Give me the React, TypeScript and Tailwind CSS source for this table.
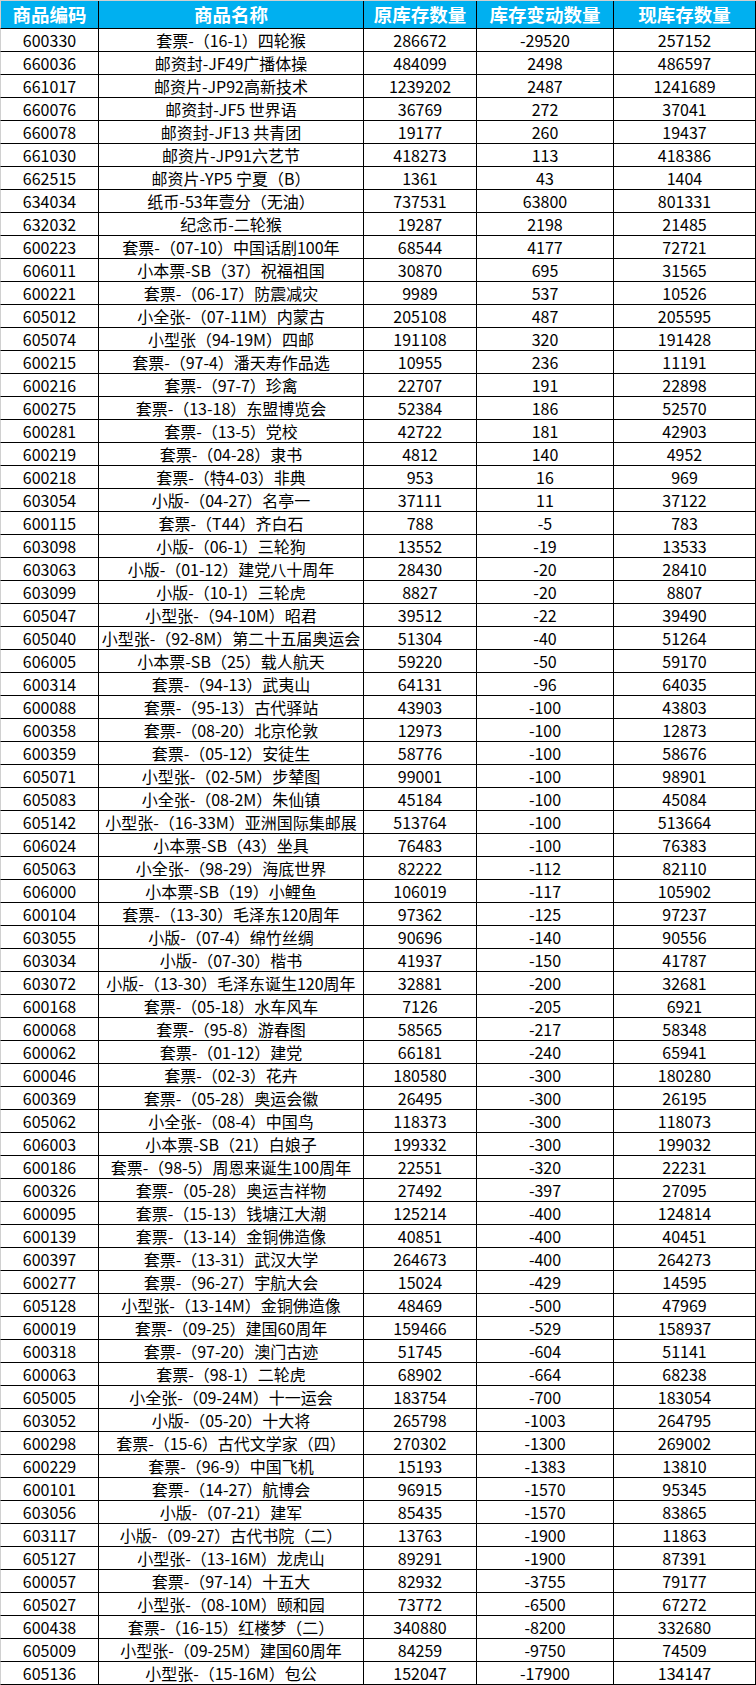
import React from "react";

const rows: [string, string, number, number, number][] = [
  ["600330", "套票-（16-1）四轮猴", 286672, -29520, 257152],
  ["660036", "邮资封-JF49广播体操", 484099, 2498, 486597],
  ["661017", "邮资片-JP92高新技术", 1239202, 2487, 1241689],
  ["660076", "邮资封-JF5 世界语", 36769, 272, 37041],
  ["660078", "邮资封-JF13 共青团", 19177, 260, 19437],
  ["661030", "邮资片-JP91六艺节", 418273, 113, 418386],
  ["662515", "邮资片-YP5 宁夏（B）", 1361, 43, 1404],
  ["634034", "纸币-53年壹分（无油）", 737531, 63800, 801331],
  ["632032", "纪念币-二轮猴", 19287, 2198, 21485],
  ["600223", "套票-（07-10）中国话剧100年", 68544, 4177, 72721],
  ["606011", "小本票-SB（37）祝福祖国", 30870, 695, 31565],
  ["600221", "套票-（06-17）防震减灾", 9989, 537, 10526],
  ["605012", "小全张-（07-11M）内蒙古", 205108, 487, 205595],
  ["605074", "小型张（94-19M）四邮", 191108, 320, 191428],
  ["600215", "套票-（97-4）潘天寿作品选", 10955, 236, 11191],
  ["600216", "套票-（97-7）珍禽", 22707, 191, 22898],
  ["600275", "套票-（13-18）东盟博览会", 52384, 186, 52570],
  ["600281", "套票-（13-5）党校", 42722, 181, 42903],
  ["600219", "套票-（04-28）隶书", 4812, 140, 4952],
  ["600218", "套票-（特4-03）非典", 953, 16, 969],
  ["603054", "小版-（04-27）名亭一", 37111, 11, 37122],
  ["600115", "套票-（T44）齐白石", 788, -5, 783],
  ["603098", "小版-（06-1）三轮狗", 13552, -19, 13533],
  ["603063", "小版-（01-12）建党八十周年", 28430, -20, 28410],
  ["603099", "小版-（10-1）三轮虎", 8827, -20, 8807],
  ["605047", "小型张-（94-10M）昭君", 39512, -22, 39490],
  ["605040", "小型张-（92-8M）第二十五届奥运会", 51304, -40, 51264],
  ["606005", "小本票-SB（25）载人航天", 59220, -50, 59170],
  ["600314", "套票-（94-13）武夷山", 64131, -96, 64035],
  ["600088", "套票-（95-13）古代驿站", 43903, -100, 43803],
  ["600358", "套票-（08-20）北京伦敦", 12973, -100, 12873],
  ["600359", "套票-（05-12）安徒生", 58776, -100, 58676],
  ["605071", "小型张-（02-5M）步辇图", 99001, -100, 98901],
  ["605083", "小全张-（08-2M）朱仙镇", 45184, -100, 45084],
  ["605142", "小型张-（16-33M）亚洲国际集邮展", 513764, -100, 513664],
  ["606024", "小本票-SB（43）坐具", 76483, -100, 76383],
  ["605063", "小全张-（98-29）海底世界", 82222, -112, 82110],
  ["606000", "小本票-SB（19）小鲤鱼", 106019, -117, 105902],
  ["600104", "套票-（13-30）毛泽东120周年", 97362, -125, 97237],
  ["603055", "小版-（07-4）绵竹丝绸", 90696, -140, 90556],
  ["603034", "小版-（07-30）楷书", 41937, -150, 41787],
  ["603072", "小版-（13-30）毛泽东诞生120周年", 32881, -200, 32681],
  ["600168", "套票-（05-18）水车风车", 7126, -205, 6921],
  ["600068", "套票-（95-8）游春图", 58565, -217, 58348],
  ["600062", "套票-（01-12）建党", 66181, -240, 65941],
  ["600046", "套票-（02-3）花卉", 180580, -300, 180280],
  ["600369", "套票-（05-28）奥运会徽", 26495, -300, 26195],
  ["605062", "小全张-（08-4）中国鸟", 118373, -300, 118073],
  ["606003", "小本票-SB（21）白娘子", 199332, -300, 199032],
  ["600186", "套票-（98-5）周恩来诞生100周年", 22551, -320, 22231],
  ["600326", "套票-（05-28）奥运吉祥物", 27492, -397, 27095],
  ["600095", "套票-（15-13）钱塘江大潮", 125214, -400, 124814],
  ["600139", "套票-（13-14）金铜佛造像", 40851, -400, 40451],
  ["600397", "套票-（13-31）武汉大学", 264673, -400, 264273],
  ["600277", "套票-（96-27）宇航大会", 15024, -429, 14595],
  ["605128", "小型张-（13-14M）金铜佛造像", 48469, -500, 47969],
  ["600019", "套票-（09-25）建国60周年", 159466, -529, 158937],
  ["600318", "套票-（97-20）澳门古迹", 51745, -604, 51141],
  ["600063", "套票-（98-1）二轮虎", 68902, -664, 68238],
  ["605005", "小全张-（09-24M）十一运会", 183754, -700, 183054],
  ["603052", "小版-（05-20）十大将", 265798, -1003, 264795],
  ["600298", "套票-（15-6）古代文学家（四）", 270302, -1300, 269002],
  ["600229", "套票-（96-9）中国飞机", 15193, -1383, 13810],
  ["600101", "套票-（14-27）航博会", 96915, -1570, 95345],
  ["603056", "小版-（07-21）建军", 85435, -1570, 83865],
  ["603117", "小版-（09-27）古代书院（二）", 13763, -1900, 11863],
  ["605127", "小型张-（13-16M）龙虎山", 89291, -1900, 87391],
  ["600057", "套票-（97-14）十五大", 82932, -3755, 79177],
  ["605027", "小型张-（08-10M）颐和园", 73772, -6500, 67272],
  ["600438", "套票-（16-15）红楼梦（二）", 340880, -8200, 332680],
  ["605009", "小型张-（09-25M）建国60周年", 84259, -9750, 74509],
  ["605136", "小型张-（15-16M）包公", 152047, -17900, 134147],
];

const font = { fontFamily: '"Microsoft YaHei", "Noto Sans CJK SC", "Noto Sans", sans-serif' };

export default function App() {
  return (
    <div className="w-[756px] h-[1685px] bg-white text-black overflow-hidden" style={font}>
      <div className="grid grid-cols-[99px_265px_113px_137px_142px] h-[29px] bg-[#00b0f0] border-t border-t-[#d0d0d0] text-white font-bold text-[18.5px] leading-none">
        <div className="flex items-center justify-center border-l border-l-[#d0d0d0] border-r border-r-black border-b border-b-black">商品编码</div>
        <div className="flex items-center justify-center border-r border-r-black border-b border-b-black">商品名称</div>
        <div className="flex items-center justify-center border-r border-r-black border-b border-b-black">原库存数量</div>
        <div className="flex items-center justify-center border-r border-r-black border-b border-b-black">库存变动数量</div>
        <div className="flex items-center justify-center border-r border-r-black border-b border-b-black">现库存数量</div>
      </div>
      {rows.map((r) => (
        <div key={r[0] + r[1]} className="grid grid-cols-[99px_265px_113px_137px_142px] h-[23px] text-[16px] leading-none">
          <div className="flex items-center justify-center border-l border-l-[#d0d0d0] border-r border-r-black border-b border-b-black">{r[0]}</div>
          <div className="flex items-center justify-center overflow-hidden whitespace-nowrap border-r border-r-black border-b border-b-black">{r[1]}</div>
          <div className="flex items-center justify-center border-r border-r-black border-b border-b-black">{r[2]}</div>
          <div className="flex items-center justify-center border-r border-r-black border-b border-b-black">{r[3]}</div>
          <div className="flex items-center justify-center border-r border-r-black border-b border-b-black">{r[4]}</div>
        </div>
      ))}
    </div>
  );
}
